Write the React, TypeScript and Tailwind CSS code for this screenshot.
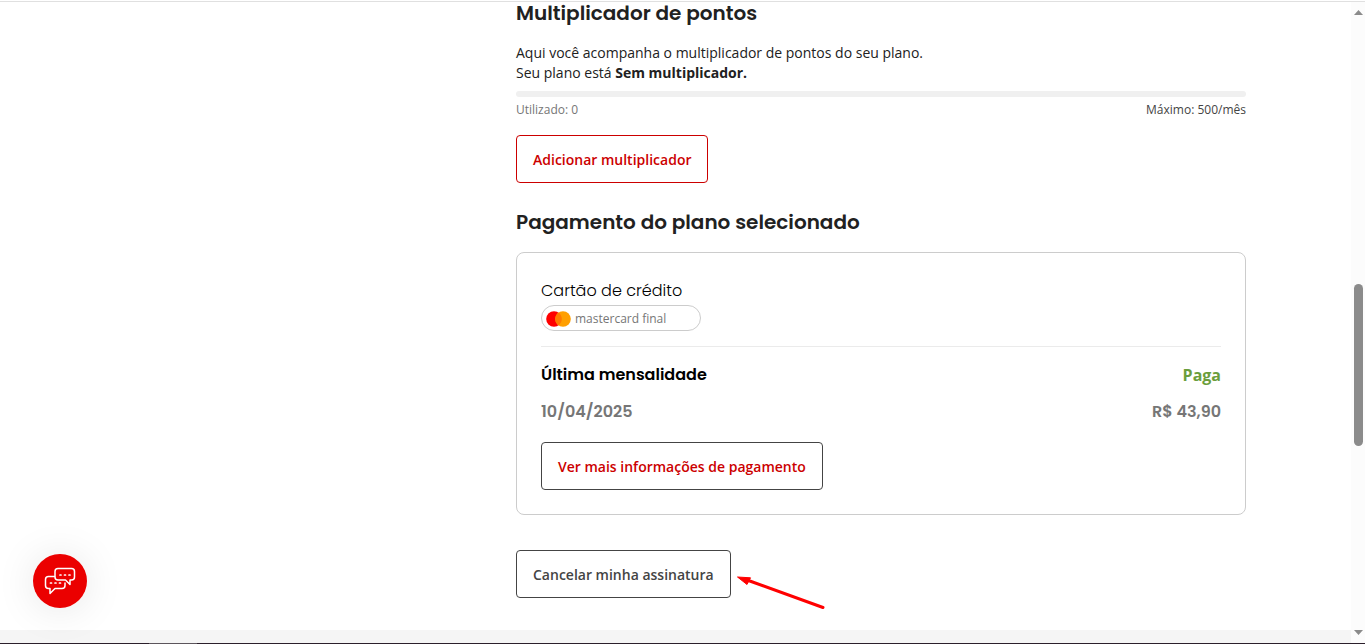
import type { ReactNode } from "react"

const headingFont = "font-['Poppins','Inter',sans-serif]"

function SectionTitle({ children }: { children: ReactNode }) {
  return <h2 className={`${headingFont} text-xl leading-[22px] font-semibold text-[#212121]`}>{children}</h2>
}

function OutlineButton({ children, className }: { children: ReactNode; className: string }) {
  return (
    <button
      type="button"
      className={`h-12 rounded-sm border bg-white px-4 pt-0.5 text-sm font-semibold whitespace-nowrap ${className}`}
    >
      {children}
    </button>
  )
}

function MastercardLogo() {
  return (
    <svg width="25" height="16" viewBox="0 0 25 16" aria-hidden="true">
      <circle cx="8" cy="8" r="7.8" fill="#ff0000" />
      <circle cx="17" cy="8" r="7.8" fill="#ff9f00" />
      <path d="M12.5 1.6a7.800 7.800 0 0 1 0 12.800a7.800 7.800 0 0 1 0-12.800z" fill="#ff7a00" />
    </svg>
  )
}

function PointsMultiplier() {
  return (
    <section>
      <SectionTitle>Multiplicador de pontos</SectionTitle>
      <p className="mt-[19px] text-sm leading-5 text-[#212121]">
        Aqui você acompanha o multiplicador de pontos do seu plano.
        <br />
        Seu plano está <strong className="font-bold">Sem multiplicador.</strong>
      </p>
      <div className="mt-2 h-1.5 rounded-full bg-[#f0f0f0]" />
      <div className="mt-[3px] mb-[15px] flex justify-between text-xs leading-5">
        <span className="text-[#767676]">Utilizado: 0</span>
        <span className="text-[#444]">Máximo: 500/mês</span>
      </div>
      <OutlineButton className="border-[#cc0000] text-[#cc0000]">Adicionar multiplicador</OutlineButton>
    </section>
  )
}

function PlanPayment() {
  return (
    <section className="mt-7">
      <SectionTitle>Pagamento do plano selecionado</SectionTitle>
      <div className="mt-[19px] rounded-lg border border-[#ccc] p-6">
        <h3 className={`${headingFont} text-base leading-7 font-light text-black`}>Cartão de crédito</h3>
        <div className="flex h-[26px] w-40 items-center gap-1 rounded-full border border-[#ccc] px-1 pt-0.5 text-xs text-[#767676]">
          <MastercardLogo />
          mastercard final
        </div>

        <hr className="mt-[15px] border-[#ebebeb]" />

        <div className="mt-4 flex justify-between text-base leading-6">
          <h3 className={`${headingFont} font-semibold text-black`}>Última mensalidade</h3>
          <span className="font-bold text-[#6b9e3c]">Paga</span>
        </div>
        <div className={`${headingFont} mt-[13px] mb-[18px] flex justify-between text-base leading-6 font-semibold text-[#767676]`}>
          <span>10/04/2025</span>
          <span>R$ 43,90</span>
        </div>
        <OutlineButton className="border-[#444] text-[#cc0000]">Ver mais informações de pagamento</OutlineButton>
      </div>
    </section>
  )
}

function Arrow() {
  return (
    <svg className="absolute top-6 left-full ml-1.5" width="90" height="36" viewBox="0 0 90 36" aria-hidden="true">
      <path d="M10 6L86 33.500" stroke="#ff0000" strokeWidth="3" strokeLinecap="round" />
      <path d="M0.500 3L13.500 3.800L10 10.500Z" fill="#ff0000" stroke="#ff0000" strokeWidth="1" strokeLinejoin="round" />
    </svg>
  )
}

function ChatButton() {
  return (
    <button
      type="button"
      aria-label="Abrir chat"
      className="fixed bottom-9 left-[33px] flex size-[54px] items-center justify-center rounded-full bg-[#eb0000] shadow-[0_2px_40px_rgba(0,0,0,0.10)]"
    >
      <svg width="32" height="28" viewBox="0 0 32 28" fill="none" stroke="#fff" strokeWidth="1.5" strokeLinecap="round" strokeLinejoin="round" aria-hidden="true">
        <path d="M14 1.5H27.5a3 3 0 0 1 3 3V10a3 3 0 0 1-3 3H26V17.5L21.5 13H14a3 3 0 0 1-3-3V4.500a3 3 0 0 1 3-3z" />
        <path d="M10.500 9.500H4.500a3 3 0 0 0-3 3V18.500a3 3 0 0 0 3 3H6V26.500L11 21.500H18a3 3 0 0 0 3-3V16" />
        <path d="M16 8H17M20.500 8H21.500M25 8H26M6.500 16H7.500M11 16H12M15.500 16H16.500" strokeWidth="1.700" />
      </svg>
    </button>
  )
}

function Scrollbar() {
  return (
    <div className="flex w-3.5 shrink-0 flex-col items-center justify-between bg-[#fcfcfc] pt-2 pb-2" aria-hidden="true">
      <svg width="9" height="5" viewBox="0 0 9 5" fill="#8b8b8b">
        <path d="M4.500 0L9 5H0z" />
      </svg>
      <div className="mt-[84px] h-[162px] w-[9px] rounded-full bg-[#8b8b8b]" />
      <svg width="9" height="5" viewBox="0 0 9 5" fill="#8b8b8b">
        <path d="M4.500 5L9 0H0z" />
      </svg>
    </div>
  )
}

export default function App() {
  return (
    <div className="flex min-h-screen flex-col bg-white font-['Open_Sans',sans-serif]">
      <div className="h-0.5 border-b border-[#e0e0e0]" />
      <div className="flex grow">
        <div className="flex grow flex-col justify-between">
          <main className="mx-auto w-full max-w-[1141px] pb-8 pl-[411px]">
            <PointsMultiplier />
            <PlanPayment />
            <div className="relative mt-[35px] w-fit">
              <OutlineButton className="border-[#444] text-[#444]">Cancelar minha assinatura</OutlineButton>
              <Arrow />
            </div>
          </main>
          <footer className="h-[13px] bg-[#f5f5f5]" />
        </div>
        <Scrollbar />
      </div>
      <div className="flex h-px bg-[#2b1f2b]">
        <div className="ml-[149px] w-12 bg-[#5c555c]" />
      </div>
      <ChatButton />
    </div>
  )
}
